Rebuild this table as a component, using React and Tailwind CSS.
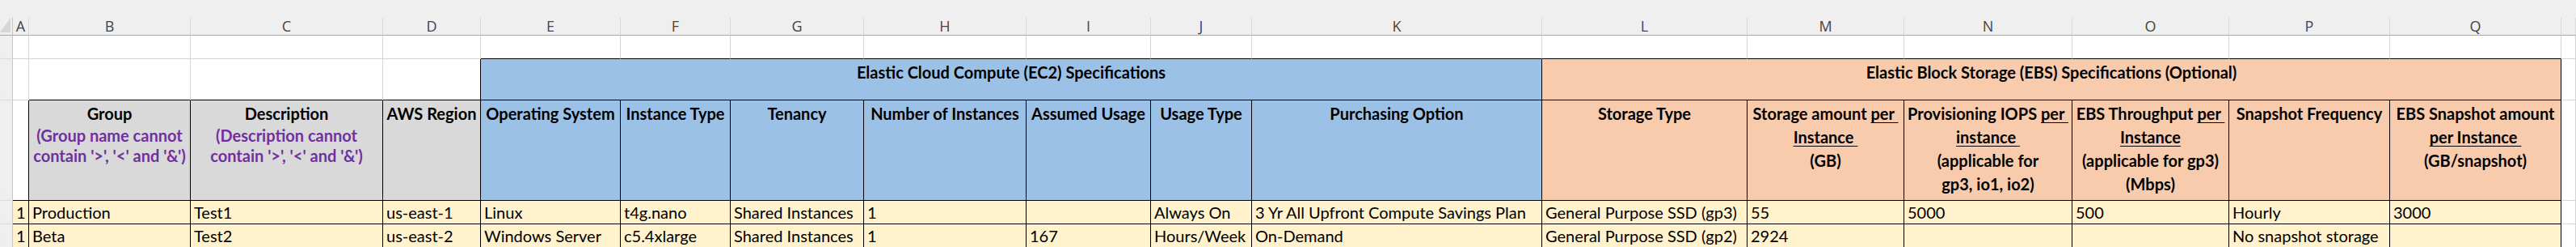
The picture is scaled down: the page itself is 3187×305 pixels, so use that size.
import clsx from "clsx";

const letters = ["", "A", "B", "C", "D", "E", "F", "G", "H", "I", "J", "K", "L", "M", "N", "O", "P", "Q", ""];

// right / bottom border colours per cell: g = sheet gridline, k = black cell border
const RB = { g: "border-r-[#d4d4d4]", k: "border-r-black" };
const BB = { g: "border-b-[#d4d4d4]", k: "border-b-black" };

const Cell = ({ r = "g", b = "g", className, children }) => (
    <div className={clsx("border-r border-b overflow-hidden", RB[r], BB[b], className)}>{children}</div>
);

const RowNum = ({ n }) => (
    <div className="flex items-end overflow-hidden border-r border-b border-r-[#c6c6c6] border-b-[#dcdcdc] bg-[#efefef] pb-[2px]">
        <span className="-ml-[9px] font-['Liberation_Sans',sans-serif] text-[17px] leading-none text-[#8a96a6]">{n}</span>
    </div>
);

const U = ({ children }) => <span className="underline decoration-1 underline-offset-[3px]">{children}</span>;

const Purple = ({ children }) => (
    <div className="whitespace-pre text-[20px] leading-[25px] text-[#7030a0]">{children}</div>
);

const Line = ({ children }) => <div className="whitespace-pre">{children}</div>;

const headers = [
    { bg: "bg-[#d9d9d9]", lines: ["Group"], purple: ["(Group name cannot", "contain '>', '<' and '&')"] },
    { bg: "bg-[#d9d9d9]", lines: ["Description"], purple: ["(Description cannot", "contain '>', '<' and '&')"] },
    { bg: "bg-[#d9d9d9]", lines: ["AWS Region"] },
    { bg: "bg-[#9bc2e6]", lines: ["Operating System"] },
    { bg: "bg-[#9bc2e6]", lines: ["Instance Type"] },
    { bg: "bg-[#9bc2e6]", lines: ["Tenancy"] },
    { bg: "bg-[#9bc2e6]", lines: ["Number of Instances"] },
    { bg: "bg-[#9bc2e6]", lines: ["Assumed Usage"] },
    { bg: "bg-[#9bc2e6]", lines: ["Usage Type"] },
    { bg: "bg-[#9bc2e6]", lines: ["Purchasing Option"] },
    { bg: "bg-[#f8cbad]", lines: ["Storage Type"] },
    { bg: "bg-[#f8cbad]", lines: [<>Storage amount <U>per </U></>, <U>Instance </U>, "(GB)"] },
    { bg: "bg-[#f8cbad]", lines: [<>Provisioning IOPS <U>per </U></>, <U>instance </U>, "(applicable for", "gp3, io1, io2)"] },
    { bg: "bg-[#f8cbad]", lines: [<>EBS Throughput <U>per </U></>, <U>Instance</U>, "(applicable for gp3)", "(Mbps)"] },
    { bg: "bg-[#f8cbad]", lines: ["Snapshot Frequency"] },
    { bg: "bg-[#f8cbad]", lines: ["EBS Snapshot amount", <U>per Instance </U>, "(GB/snapshot)"] },
];

const rows = [
    ["1", "Production", "Test1", "us-east-1", "Linux", "t4g.nano", "Shared Instances", "1", "", "Always On", "3 Yr All Upfront Compute Savings Plan", "General Purpose SSD (gp3)", "55", "5000", "500", "Hourly", "3000"],
    ["1", "Beta", "Test2", "us-east-2", "Windows Server", "c5.4xlarge", "Shared Instances", "1", "167", "Hours/Week", "On-Demand", "General Purpose SSD (gp2)", "2924", "", "", "No snapshot storage", ""],
];

export default function App() {
    return (
        <div className="h-[305px] w-[3187px] overflow-hidden bg-white font-[Lato,'Liberation_Sans',sans-serif] text-black">
            <div className="h-[22px] bg-[#efefef]" />
            <div className="grid grid-cols-[16px_20px_200px_238px_121px_173px_136px_165px_201px_154px_125px_359px_254px_194px_208px_194px_199px_212px_1fr] grid-rows-[22px_29px_51px_124px_29px_29px]">
                {/* column letters */}
                <div className="relative border-r border-b border-r-[#c6c6c6] border-b-[#a8a8a8] bg-[#efefef]">
                    <svg className="absolute left-0 top-0" width="16" height="22" viewBox="0 0 16 22">
                        <polygon points="13,0 13,18 0,18" fill="#d6d6d6" />
                    </svg>
                </div>
                {letters.slice(1).map((l, i) => (
                    <div
                        key={"h" + i}
                        className="flex items-center justify-center border-r border-b border-r-[#d8d8d8] border-b-[#a8a8a8] bg-[#efefef] font-['Open_Sans',sans-serif] text-[18px] text-[#444]"
                    >
                        {l}
                    </div>
                ))}

                {/* row 1 */}
                <RowNum n="1" />
                {letters.slice(1).map((l, i) => (
                    <Cell key={"r1" + i} b={i >= 4 && i <= 16 ? "k" : "g"} />
                ))}

                {/* row 2: section titles */}
                <RowNum n="2" />
                <Cell />
                <Cell b="k" />
                <Cell b="k" />
                <Cell r="k" b="k" />
                <Cell r="k" b="k" className="col-span-7 flex justify-center bg-[#9bc2e6] pt-[2px] text-[20px] font-bold leading-[29px]">
                    Elastic Cloud Compute (EC2) Specifications
                </Cell>
                <Cell r="k" b="k" className="col-span-6 flex justify-center bg-[#f8cbad] pt-[2px] text-[20px] font-bold leading-[29px]">
                    Elastic Block Storage (EBS) Specifications (Optional)
                </Cell>
                <Cell />

                {/* row 3: column headers */}
                <RowNum n="3" />
                <Cell r="k" b="k" />
                {headers.map((h, i) => (
                    <Cell key={"hd" + i} r="k" b="k" className={clsx("flex flex-col items-center pt-[2px] text-center text-[20px] font-bold leading-[29px]", h.bg)}>
                        {h.lines.map((ln, j) => (
                            <Line key={j}>{ln}</Line>
                        ))}
                        {h.purple && h.purple.map((p, j) => <Purple key={"p" + j}>{p}</Purple>)}
                    </Cell>
                ))}
                <Cell />

                {/* data rows */}
                {rows.map((row, ri) => [
                    <RowNum key={"n" + ri} n={String(ri + 4)} />,
                    ...row.map((v, ci) => (
                        <Cell key={ri + "-" + ci} r="k" b="k" className="flex items-center whitespace-nowrap bg-[#fff2cc] pl-[4px] text-[20px]">
                            {v}
                        </Cell>
                    )),
                    <Cell key={"e" + ri} />,
                ])}
            </div>
        </div>
    );
}
